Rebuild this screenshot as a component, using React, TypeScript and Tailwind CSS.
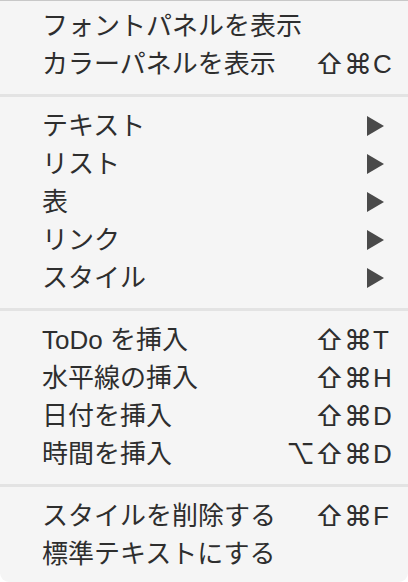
import React from 'react';

type Item = {
  label: string;
  keys?: string[];
  submenu?: boolean;
};

const groups: Item[][] = [
  [
    { label: 'フォントパネルを表示' },
    { label: 'カラーパネルを表示', keys: ['⇧', '⌘', 'C'] },
  ],
  [
    { label: 'テキスト', submenu: true },
    { label: 'リスト', submenu: true },
    { label: '表', submenu: true },
    { label: 'リンク', submenu: true },
    { label: 'スタイル', submenu: true },
  ],
  [
    { label: 'ToDo を挿入', keys: ['⇧', '⌘', 'T'] },
    { label: '水平線の挿入', keys: ['⇧', '⌘', 'H'] },
    { label: '日付を挿入', keys: ['⇧', '⌘', 'D'] },
    { label: '時間を挿入', keys: ['⌥', '⇧', '⌘', 'D'] },
  ],
  [
    { label: 'スタイルを削除する', keys: ['⇧', '⌘', 'F'] },
    { label: '標準テキストにする' },
  ],
];

const symbolCell: Record<string, string> = {
  '⌥': 'w-[29px]',
  '⇧': 'w-[29px]',
  '⌘': 'w-[27px]',
};

function Shortcut({ keys }: { keys: string[] }) {
  return (
    <div className="ml-auto flex items-center h-full">
      {keys.map((k, i) =>
        symbolCell[k] ? (
          <span
            key={i}
            className={`${symbolCell[k]} text-center text-[28px] font-['Inter','DejaVu_Sans',sans-serif]`}
          >
            {k}
          </span>
        ) : (
          <span key={i} className="w-[37px] pl-[2px] text-left">
            {k}
          </span>
        )
      )}
    </div>
  );
}

function SubmenuArrow() {
  return (
    <div className="ml-auto w-[41px] flex items-center">
      <svg width="17" height="20" viewBox="0 0 17 20">
        <polygon points="0,0 17,10 0,20" fill="#4a4a4a" />
      </svg>
    </div>
  );
}

function MenuRow({ item }: { item: Item }) {
  return (
    <div className="flex items-center h-[38px] leading-[38px] pl-[42px]">
      <span className="whitespace-nowrap">{item.label}</span>
      {item.keys && <Shortcut keys={item.keys} />}
      {item.submenu && <SubmenuArrow />}
    </div>
  );
}

export default function App() {
  return (
    <div className="w-[408px] h-[582px] bg-white">
      <div className="bg-[#f5f5f5] border-t border-[#c8c8c8] rounded-b-[9px] pt-[6px] pb-[9px] text-[26px] text-[#2e2e2e] font-['Liberation_Sans','Noto_Sans_CJK_JP',sans-serif]">
        {groups.map((group, gi) => (
          <div key={gi}>
            {gi > 0 && (
              <div className="pt-[11px] pb-[10px]">
                <div className="h-[3px] bg-[#e3e3e3]" />
              </div>
            )}
            {group.map((item) => (
              <MenuRow key={item.label} item={item} />
            ))}
          </div>
        ))}
      </div>
    </div>
  );
}
